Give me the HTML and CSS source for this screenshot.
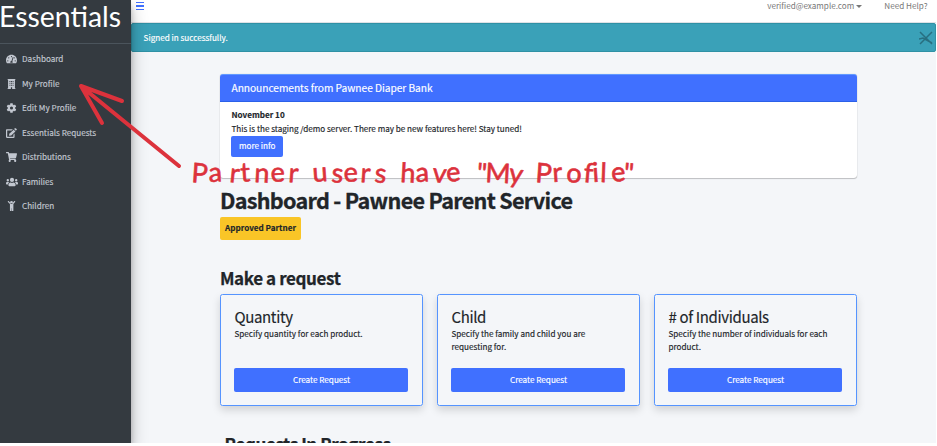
FILE: index.html
```html
<!DOCTYPE html>
<html lang="en">
<head>
<meta charset="utf-8">
<title>Essentials Dashboard</title>
<link rel="stylesheet" href="styles.css">
</head>
<body>
<div class="app">
  <aside class="sidebar">
    <div class="brand"><span>Essentials</span></div>
    <nav class="menu">
      <a class="item"><svg class="icon" viewBox="0 0 576 512"><path fill-rule="evenodd" d="M288 32C129 32 0 161 0 320c0 53 14 102 39 145 6 10 16 15 27 15h444c11 0 21-5 27-15 25-43 39-92 39-145C576 161 447 32 288 32zm0 64a32 32 0 110 64 32 32 0 010-64zM96 384a32 32 0 110-64 32 32 0 010 64zm48-160a32 32 0 110-64 32 32 0 010 64zm247-33l-61 184c27 22 27 45 13 73H233c-22-42 0-89 52-92l61-184c10-28 54-12 45 19zm41 33c-16 0-27-11-27-32 0-18 11-32 27-32a32 32 0 010 64zm48 160a32 32 0 110-64 32 32 0 010 64z"/></svg><span>Dashboard</span></a>
      <a class="item"><svg class="icon" viewBox="0 0 448 512"><path fill-rule="evenodd" d="M24 0h400v36h-24v440h24v36H256v-88h-64v88H24v-36h24V36H24zm96 96v52h48V96zm80 0v52h48V96zm80 0v52h48V96zM120 192v52h48v-52zm80 0v52h48v-52zm80 0v52h48v-52zM120 288v52h48v-52zm80 0v52h48v-52zm80 0v52h48v-52z"/></svg><span>My Profile</span></a>
      <a class="item"><svg class="icon" viewBox="0 0 512 512"><path fill-rule="evenodd" d="M487 316l-42-25c4-23 4-47 0-70l42-25c5-3 8-9 6-15-11-35-30-67-55-94-4-5-10-6-16-3l-42 25c-18-15-39-27-61-35V25c0-6-4-11-10-12-36-8-73-8-108 0-6 1-10 6-10 12v49c-22 8-43 20-61 35L88 84c-5-3-12-2-16 3-25 27-44 59-55 94-2 6 1 12 6 15l42 25c-4 23-4 47 0 70l-42 25c-5 3-8 9-6 15 11 35 30 67 55 94 4 5 10 6 16 3l42-25c18 15 39 27 61 35v49c0 6 4 11 10 12 36 8 73 8 108 0 6-1 10-6 10-12v-49c22-8 43-20 61-35l42 25c5 3 12 2 16-3 25-27 44-59 55-94 2-6-1-12-6-15zM256 336a80 80 0 110-160 80 80 0 010 160z"/></svg><span>Edit My Profile</span></a>
      <a class="item"><svg class="icon" viewBox="0 0 576 512"><path d="M403 84l90 90-219 219-93 10c-12 1-23-9-21-21l10-93zm161-22l-49-49c-15-15-40-15-55 0l-35 35 90 90 49-49c15-15 15-12 0-27zM384 346V448H64V128h230l64-64H48C22 64 0 86 0 112v352c0 26 22 48 48 48h352c26 0 48-22 48-48V282z"/></svg><span>Essentials Requests</span></a>
      <a class="item"><svg class="icon" viewBox="0 0 576 512"><path d="M528 301l47-208c4-15-8-29-23-29H159l-9-45C148 8 138 0 126 0H24C11 0 0 11 0 24v16c0 13 11 24 24 24h70l70 343a56 56 0 1067 9h210a56 56 0 1064-10l5-26c4-15-8-29-23-29H218l-7-32h294c11 0 21-8 23-18z"/></svg><span>Distributions</span></a>
      <a class="item"><svg class="icon wide" viewBox="0 0 640 512"><path d="M96 224a64 64 0 100-128 64 64 0 000 128zm448 0a64 64 0 100-128 64 64 0 000 128zm32 32h-64c-18 0-34 7-45 19 40 22 69 62 75 109h66c18 0 32-14 32-32v-32c0-35-29-64-64-64zm-256 0a112 112 0 100-224 112 112 0 000 224zm77 32h-8c-42 20-96 20-138 0h-8c-64 0-115 51-115 115v29c0 26 21 48 48 48h288c26 0 48-22 48-48v-29c0-64-52-115-115-115zM173 275c-11-12-27-19-45-19H64c-35 0-64 29-64 64v32c0 18 14 32 32 32h66c6-47 35-87 75-109z"/></svg><span>Families</span></a>
      <a class="item"><svg class="icon" viewBox="0 0 384 512"><path d="M120 72a72 72 0 11144 0 72 72 0 01-144 0zm255-63c-13-12-33-12-46 0l-91 91h-92l-91-91C42-3 22-3 9 9s-12 33 0 46l103 102v323c0 18 14 32 32 32h16c18 0 32-14 32-32V368h16v112c0 18 14 32 32 32h16c18 0 32-14 32-32V157L375 55c12-13 12-33 0-46z"/></svg><span>Children</span></a>
    </nav>
  </aside>
  <div class="page">
    <header class="topbar">
      <div class="burger"><i></i><i></i><i></i></div>
      <div class="account"><span class="email">verified@example.com</span><i class="caret"></i><span class="help">Need Help?</span></div>
    </header>
    <div class="alert"><span>Signed in successfully.</span>
      <svg class="close" viewBox="0 0 14 14"><path d="M1 1L13 13M13 1L1 13M0 8L4 7L13 12"/></svg>
    </div>
    <main class="content">
      <section class="news">
        <div class="news-head">Announcements from Pawnee Diaper Bank</div>
        <div class="news-body">
          <b class="date">November 10</b>
          <p class="message">This is the staging /demo server. There may be new features here! Stay tuned!</p>
          <a class="more">more info</a>
        </div>
      </section>
      <h1>Dashboard - Pawnee Parent Service</h1>
      <span class="status">Approved Partner</span>
      <h2>Make a request</h2>
      <div class="cards">
        <article class="card"><h3>Quantity</h3><p>Specify quantity for each product.</p><a class="create">Create Request</a></article>
        <article class="card"><h3>Child</h3><p>Specify the family and child you are<br>requesting for.</p><a class="create">Create Request</a></article>
        <article class="card"><h3># of Individuals</h3><p>Specify the number of individuals for each<br>product.</p><a class="create">Create Request</a></article>
      </div>
      <h2 class="progress">Requests In Progress</h2>
    </main>
  </div>
  <svg class="note" viewBox="0 0 937 446">
    <path d="M179 166L82 87M122 101L81 86L102 123"/>
    <g class="words">
      <text y="182" x="191 209 229 241 254 271 288" rotate="4 -3 6 -4 3 -3 4">Partner</text>
      <text y="182" x="313 331 344 360 374" rotate="-4 5 -3 4 6">users</text>
      <text y="182" x="400 416 432 447" rotate="3 -3 5 -6">have</text>
      <text y="182" x="476 485 508" rotate="5 3 8">"My</text>
      <text y="182" x="535 553 566 583 593 600 612 623" rotate="4 -4 3 5 -4 2 -6 5">Profile"</text>
    </g>
  </svg>
</div>
</body>
</html>
```
FILE: styles.css
```css
* { box-sizing: border-box; }
body { margin: 0; background: #fff; overflow: hidden; color: #212529; font-family: "Noto Sans CJK SC", sans-serif; font-size: 8.15px; line-height: 13.7px; -webkit-text-stroke: .15px; }
h1, h2, h3, p { margin: 0; }
.app { position: relative; display: flex; width: 936px; height: 443px; overflow: hidden; background: #f4f6f9; }
.sidebar { width: 131.4px; flex: none; background: #343a40; box-shadow: 0 8px 16px rgba(0,0,0,.25), 0 6px 6px rgba(0,0,0,.22); position: relative; z-index: 2; }
.brand { height: 44px; border-bottom: 1px solid #4b545c; color: #fff; font-family: Lato, sans-serif; font-size: 28.4px; line-height: 33px; white-space: nowrap; text-indent: -1px; -webkit-text-stroke: 0; }
.menu { padding-top: 2.8px; }
.item { display: flex; align-items: center; height: 24.5px; padding-left: 6px; gap: 5px; color: #c2c7d0; white-space: nowrap; }
.icon { width: 11px; height: 10px; fill: currentColor; flex: none; }
.wide { width: 12px; margin-right: -1px; }
.page { flex: 1; min-width: 0; }
.topbar { height: 23px; background: #fff; border-bottom: 1px solid #dee2e6; display: flex; justify-content: space-between; padding: 0 8.5px 0 4.5px; }
.burger { display: flex; flex-direction: column; gap: 2px; padding-top: 2px; }
.burger i { width: 8px; height: 1.3px; background: #4070ff; }
.account { display: flex; align-items: flex-start; color: #777; line-height: 12.5px; -webkit-text-stroke: 0; }
.caret { border: 3px solid transparent; border-top-color: #777; border-bottom: 0; margin: 5px 22px 0 2px; }
.alert { height: 29px; background: #3aa1b8; border: 1px solid #2f91a5; border-radius: 2px; color: #fff; display: flex; align-items: center; justify-content: space-between; padding: 0 2px 0 11.2px; }
.close { width: 14px; height: 14px; fill: none; stroke: #286f80; stroke-width: 1.5; }
.content { width: 637px; margin: 22px 0 0 88.6px; }
.news { height: 104px; background: #fff; border-radius: 3px; box-shadow: 0 0 1px rgba(0,0,0,.3), 0 1px 1px rgba(0,0,0,.2); }
.news-head { height: 28px; padding-left: 11.5px; background: #4070ff; border-bottom: 1px solid #2b60e8; border-top: 1px solid #6199ff; border-radius: 3px 3px 0 0; color: #fff; font-size: 10.2px; letter-spacing: -.04px; line-height: 25px; }
.news-body { padding: 6px 11.5px; display: flex; flex-direction: column; align-items: flex-start; }
.message { letter-spacing: -.01px; }
.more { margin-top: .8px; width: 51.5px; height: 21px; border-radius: 2px; background: #4070ff; color: #fff; text-align: center; line-height: 20px; }
h1 { font-size: 21.6px; letter-spacing: -.72px; line-height: 27px; margin-top: 7.5px; white-space: nowrap; -webkit-text-stroke: .3px; }
.status { display: block; margin-top: 4px; width: 81px; height: 23.5px; border-radius: 2px; background: #f9c527; font-weight: 700; line-height: 22.5px; text-align: center; }
h2 { font-size: 17px; letter-spacing: -.39px; line-height: 22px; margin-top: 27px; -webkit-text-stroke: .25px; }
.cards { display: grid; grid-template-columns: repeat(3, 203px); justify-content: space-between; margin-top: 4.5px; }
.card { height: 112.5px; padding: 13.5px 13.5px 13.5px; border: 1px solid #5594ff; border-radius: 2.5px; box-shadow: 0 4px 9px rgba(0,0,0,.15); display: flex; flex-direction: column; white-space: nowrap; }
h3 { font-size: 15px; letter-spacing: -.36px; font-weight: 400; line-height: 18.5px; }
.create { margin-top: auto; height: 24px; background: #4070ff; border-radius: 2px; color: #fff; text-align: center; line-height: 23px; }
.progress { margin: 26.5px 0 0 4.5px; }
.note { position: absolute; left: 0; top: 0; width: 937px; height: 446px; z-index: 3; fill: none; stroke: #dc323c; stroke-width: 4; stroke-linecap: round; stroke-linejoin: round; }
.words { fill: #dc323c; stroke-width: .6; font: 27px Lato, sans-serif; -webkit-text-stroke: .6px #dc323c; }
```
